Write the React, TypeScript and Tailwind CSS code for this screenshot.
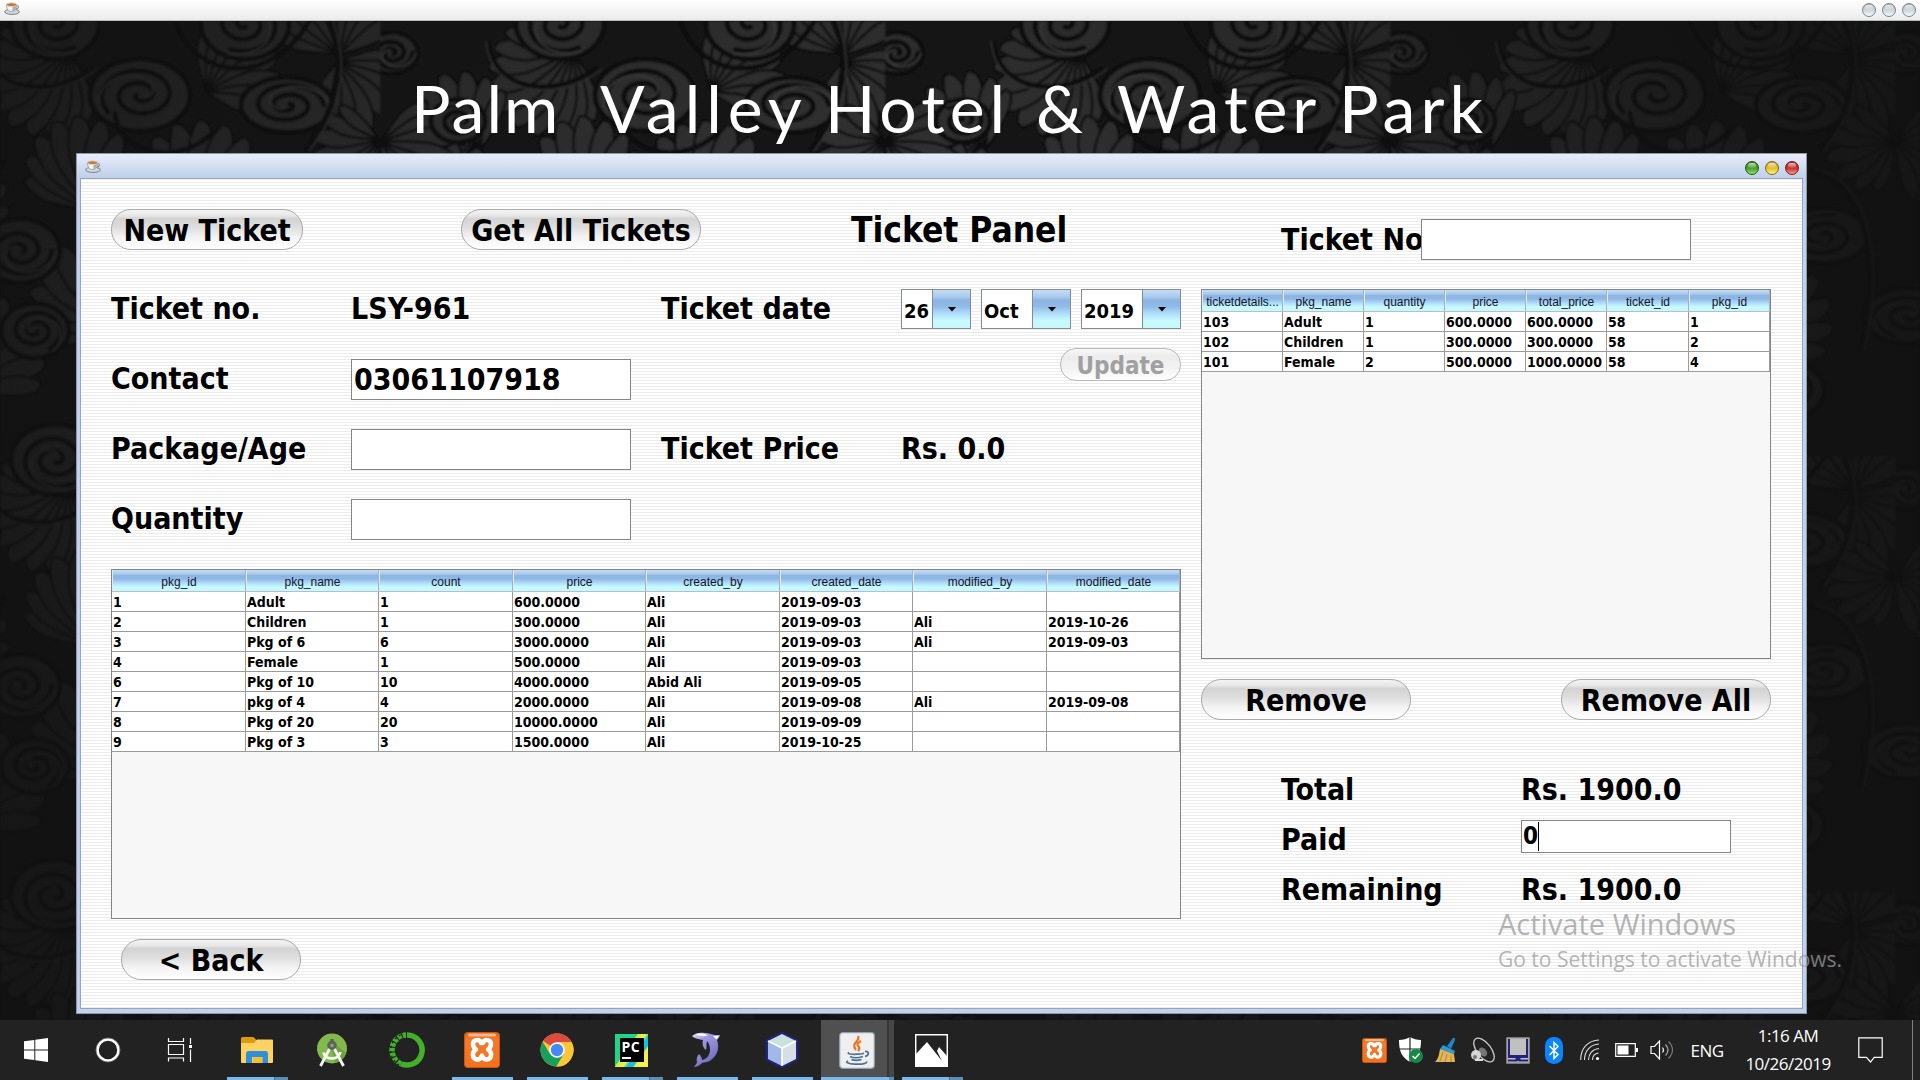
import React from "react";

const TAHOMA = "font-['DejaVu_Sans_Condensed','DejaVu_Sans',sans-serif] [font-stretch:condensed] font-bold";

/* ---------- wallpaper ---------- */

function spiral(cx: number, cy: number, r: number, turns: number, start: number, dir: number, sy = 1) {
  const n = Math.round(turns * 22);
  let d = "";
  for (let i = 0; i <= n; i++) {
    const t = i / n;
    const a = start + dir * t * turns * Math.PI * 2;
    const rr = r * (1 - t * 0.9);
    d += `${i ? "L" : "M"}${(cx + Math.cos(a) * rr).toFixed(1)} ${(cy + Math.sin(a) * rr * sy).toFixed(1)}`;
  }
  return d;
}

type CurlProps = { x: number; y: number; r: number; s?: number; dir?: number; sy?: number };
function Curl({ x, y, r, s = 0, dir = 1, sy = 0.8 }: CurlProps) {
  return (
    <g>
      <ellipse cx={x} cy={y} rx={r} ry={r * sy} fill="#363636" stroke="#0e0e0e" strokeWidth="5" />
      <path d={spiral(x, y, r * 0.8, 2.1, s, dir, sy)} fill="none" stroke="#101010" strokeWidth="5" strokeLinecap="round" />
      <path d={spiral(x, y, r * 0.93, 0.7, s, dir, sy)} fill="none" stroke="#484848" strokeWidth="1.5" />
    </g>
  );
}

type FanProps = { x: number; y: number; l: number; a: number; spread: number; n: number };
function Fan({ x, y, l, a, spread, n }: FanProps) {
  return (
    <g transform={`translate(${x} ${y})`}>
      {Array.from({ length: n }, (_, i) => {
        const k = l * (0.75 + 0.25 * Math.sin((i / (n - 1)) * Math.PI));
        return (
          <path
            key={i}
            transform={`rotate(${a + (i / (n - 1) - 0.5) * spread})`}
            d={`M0 0C${k * 0.3} ${-k * 0.06} ${k * 0.6} ${-k * 0.32} ${k} ${-k * 0.12}C${k * 1.08} ${k * 0.08} ${k * 0.6} ${k * 0.12} 0 0Z`}
            fill="#343434"
            stroke="#0e0e0e"
            strokeWidth="2.5"
          />
        );
      })}
    </g>
  );
}

function Motif() {
  return (
    <g>
      <Fan x={195} y={30} l={95} a={140} spread={120} n={10} />
      <Fan x={330} y={70} l={80} a={-30} spread={110} n={8} />
      <Fan x={463} y={34} l={95} a={-90} spread={130} n={9} />
      <Fan x={463} y={40} l={75} a={60} spread={120} n={8} />
      <Fan x={100} y={130} l={85} a={-120} spread={110} n={8} />
      <Fan x={215} y={190} l={95} a={-100} spread={100} n={8} />
      <Fan x={330} y={200} l={100} a={-95} spread={130} n={10} />
      <Fan x={60} y={210} l={90} a={-60} spread={130} n={9} />
      <Fan x={240} y={310} l={100} a={-120} spread={120} n={9} />
      <Fan x={360} y={330} l={100} a={-60} spread={130} n={9} />
      <Fan x={90} y={370} l={100} a={-70} spread={140} n={10} />
      <Fan x={300} y={430} l={90} a={-100} spread={130} n={9} />
      <Fan x={0} y={120} l={80} a={20} spread={110} n={7} />
      <Fan x={505} y={120} l={70} a={170} spread={110} n={7} />
      <Curl x={180} y={3} r={44} s={1} />
      <Curl x={370} y={3} r={44} s={2} dir={-1} />
      <Curl x={180} y={439} r={44} s={1} />
      <Curl x={370} y={439} r={44} s={2} dir={-1} />
      <Curl x={265} y={74} r={50} s={2.5} sy={0.72} />
      <Curl x={412} y={84} r={46} s={0} dir={-1} sy={0.6} />
      <Curl x={12} y={32} r={26} s={0} />
      <Curl x={78} y={100} r={27} s={4} />
      <Curl x={145} y={230} r={40} s={0} />
      <Curl x={433} y={215} r={46} s={5} dir={-1} sy={0.6} />
      <Curl x={14} y={295} r={46} s={2} sy={0.6} />
      <Curl x={519} y={295} r={46} s={2} sy={0.6} />
      <Curl x={160} y={310} r={34} s={1} dir={-1} />
      <Curl x={280} y={240} r={40} s={3} />
      <Curl x={400} y={370} r={34} s={3} />
      <path d="M108 20C112 70 175 80 218 46M300 0C320 60 400 70 440 -10M455 0C472 50 460 90 430 130M240 90C240 130 300 150 340 110M130 140C100 180 90 240 120 270M420 150C480 160 490 250 470 330M200 270C230 300 240 360 210 410" fill="none" stroke="#0d0d0d" strokeWidth="5" />
      <path d="M106 20C110 74 177 84 222 48M458 0C476 52 464 92 434 130M424 148C484 158 494 250 474 330" fill="none" stroke="#3a3a3a" strokeWidth="1.5" />
    </g>
  );
}

function Wallpaper() {
  return (
    <svg className="absolute inset-0 h-full w-full" viewBox="0 0 1920 1000" preserveAspectRatio="none" aria-hidden="true">
      <defs>
        <pattern id="damask" x="380" y="0" width="505" height="436" patternUnits="userSpaceOnUse">
          <rect width="505" height="436" fill="#131313" />
          <Motif />
        </pattern>
        <radialGradient id="vignette" gradientUnits="userSpaceOnUse" cx="860" cy="260" r="1020" gradientTransform="translate(860 260) scale(1 .75) translate(-860 -260)">
          <stop offset="0" stopColor="#111" stopOpacity="0.05" />
          <stop offset=".45" stopColor="#111" stopOpacity="0.3" />
          <stop offset=".85" stopColor="#111" stopOpacity="0.72" />
          <stop offset="1" stopColor="#111" stopOpacity="0.85" />
        </radialGradient>
        <filter id="soft"><feGaussianBlur stdDeviation=".9" /></filter>
      </defs>
      <rect width="1920" height="1000" fill="url(#damask)" filter="url(#soft)" />
      <rect width="1920" height="1000" fill="url(#vignette)" />
    </svg>
  );
}

/* ---------- small pieces ---------- */

function CupIcon() {
  return (
    <svg width="16" height="13" viewBox="0 0 16 13">
      <ellipse cx="8" cy="9.8" rx="7.4" ry="2.6" fill="#d4d8dc" stroke="#70767c" strokeWidth=".9" />
      <path d="M12 3.5c3.4-.6 3.4 3.800-1 3.600" fill="none" stroke="#8b9198" strokeWidth="1.100" />
      <path d="M2.500 2.500c.2 4.500 1.500 7 5 7s5-2.500 5.200-7z" fill="#f3f5f7" stroke="#8b9198" strokeWidth=".8" />
      <path d="M8 9c3 0 4-3 4.300-6L9 4z" fill="#a9afb6" />
      <ellipse cx="7.600" cy="2.700" rx="5" ry="1.900" fill="#c77a27" stroke="#d8dade" strokeWidth=".9" />
    </svg>
  );
}

function Orb({ className }: { className: string }) {
  return (
    <span className={`flex h-[14px] w-[14px] justify-center rounded-full border pt-px ${className}`}>
      <span className="h-[5px] w-[8px] rounded-full bg-gradient-to-b from-white/70 to-white/10" />
    </span>
  );
}

function PillButton({ className, children, disabled = false }: { className: string; children: React.ReactNode; disabled?: boolean }) {
  const tone = disabled
    ? "border-[#b9b9b9] text-[#a0a0a0] bg-[linear-gradient(#f8f8f8_0%,#ececec_25%,#f2f2f2_60%,#fefefe_100%)]"
    : "border-[#a9a9a9] text-black bg-[linear-gradient(#f4f4f4_0%,#e6e6e6_15%,#d3d3d3_22%,#dedede_45%,#f3f3f3_70%,#ffffff_100%)]";
  return (
    <button className={`flex shrink-0 items-center justify-center whitespace-nowrap border leading-none ${TAHOMA} ${tone} ${className}`}>
      {children}
    </button>
  );
}

function Label({ className = "", children }: { className?: string; children: React.ReactNode }) {
  return <div className={`shrink-0 whitespace-nowrap text-[30px] leading-none text-black ${TAHOMA} ${className}`}>{children}</div>;
}

function Field({ className = "", children }: { className?: string; children?: React.ReactNode }) {
  return <div className={`flex shrink-0 items-center border border-[#858585] bg-white leading-none text-black ${TAHOMA} ${className}`}>{children}</div>;
}

const GLOSS = "bg-[linear-gradient(#c4ddf4_0%,#a9cbed_18%,#8db4e2_27%,#8fb9e6_42%,#b0dbfa_62%,#c4fbff_80%,#cbf6ff_100%)]";

function Combo({ className, text, arrow }: { className: string; text: string; arrow: string }) {
  return (
    <div className={`flex h-[40px] shrink-0 border border-[#858b95] bg-white ${className}`}>
      <div className={`flex flex-1 items-center pl-[2px] pt-[3px] text-[20px] leading-none ${TAHOMA}`}>{text}</div>
      <div className={`flex items-center justify-center border-l border-[#858b95] ${GLOSS} ${arrow}`}>
        <svg width="8" height="5" viewBox="0 0 8 5"><path d="M0 0h8L4 4.500z" fill="#000" /></svg>
      </div>
    </div>
  );
}

type GridProps = { cols: string; head: string[]; rows: string[][]; className: string };
function DataTable({ cols, head, rows, className }: GridProps) {
  return (
    <div className={`border border-[#858585] bg-[#f7f7f7] ${className}`}>
      <div className={`grid h-[22px] border-b border-[#b5bfc9] ${cols}`}>
        {head.map((h) => (
          <div key={h} className={`flex items-center justify-center whitespace-nowrap border-l border-r border-l-[#dcebf8] border-r-[#a7b2bf] pt-[2px] font-['Liberation_Sans',Arial,sans-serif] text-[12px] leading-none text-[#15151f] ${GLOSS}`}>
            {h}
          </div>
        ))}
      </div>
      {rows.map((r, i) => (
        <div key={i} className={`grid h-[20px] bg-white ${cols}`}>
          {r.map((c, j) => (
            <div key={j} className={`flex items-center overflow-hidden whitespace-nowrap border-b border-r border-[#9b9b9b] pl-px pt-px text-[14px] leading-none text-black ${TAHOMA}`}>
              {c}
            </div>
          ))}
        </div>
      ))}
    </div>
  );
}

const PKG_HEAD = ["pkg_id", "pkg_name", "count", "price", "created_by", "created_date", "modified_by", "modified_date"];
const PKG_ROWS = [
  ["1", "Adult", "1", "600.0000", "Ali", "2019-09-03", "", ""],
  ["2", "Children", "1", "300.0000", "Ali", "2019-09-03", "Ali", "2019-10-26"],
  ["3", "Pkg of 6", "6", "3000.0000", "Ali", "2019-09-03", "Ali", "2019-09-03"],
  ["4", "Female", "1", "500.0000", "Ali", "2019-09-03", "", ""],
  ["6", "Pkg of 10", "10", "4000.0000", "Abid Ali", "2019-09-05", "", ""],
  ["7", "pkg of 4", "4", "2000.0000", "Ali", "2019-09-08", "Ali", "2019-09-08"],
  ["8", "Pkg of 20", "20", "10000.0000", "Ali", "2019-09-09", "", ""],
  ["9", "Pkg of 3", "3", "1500.0000", "Ali", "2019-10-25", "", ""],
];
const DET_HEAD = ["ticketdetails...", "pkg_name", "quantity", "price", "total_price", "ticket_id", "pkg_id"];
const DET_ROWS = [
  ["103", "Adult", "1", "600.0000", "600.0000", "58", "1"],
  ["102", "Children", "1", "300.0000", "300.0000", "58", "2"],
  ["101", "Female", "2", "500.0000", "1000.0000", "58", "4"],
];

/* ---------- application window ---------- */

function TicketWindow() {
  return (
    <div className="relative ml-[76px] flex h-[861px] w-[1731px] flex-col border border-[#8b98aa] bg-[#c2d2ec] px-[3px] pb-[4px]">
      <div className="-mx-[3px] flex h-[24px] shrink-0 items-center justify-between bg-gradient-to-b from-[#e9ecf9] to-[#bed0ea] pl-[8px] pr-[7px]">
        <CupIcon />
        <div className="flex gap-[6px] pt-[3px]">
          <Orb className="border-[#23570f] bg-[linear-gradient(#3b7a25,#4aa42a_55%,#93e06a)]" />
          <Orb className="border-[#806a14] bg-[linear-gradient(#bd9a26,#e2c22e_55%,#fff27a)]" />
          <Orb className="border-[#7a1b1b] bg-[linear-gradient(#9c2a2a,#cf3232_55%,#ff9c8e)]" />
        </div>
      </div>
      <div className="flex flex-1 gap-[20px] border border-[#98a5b6] bg-[repeating-linear-gradient(#ececec_0px,#ececec_1px,#ffffff_1px,#ffffff_3px)] pl-[30px] pt-[30px]">
        <div className="flex w-[1070px] flex-col">
          <div className="flex h-[41px] items-center">
            <PillButton className="h-[41px] w-[192px] rounded-[20px] pt-[2px] text-[30px]">New Ticket</PillButton>
            <PillButton className="ml-[158px] h-[41px] w-[240px] rounded-[20px] pt-[2px] text-[30px]">Get All Tickets</PillButton>
            <Label className="ml-[150px] pt-[2px] text-[35px]">Ticket Panel</Label>
          </div>
          <div className="mt-[24px] flex h-[70px] items-center">
            <Label className="w-[240px]">Ticket no.</Label>
            <Label className="w-[310px]">LSY-961</Label>
            <Label className="w-[240px]">Ticket date</Label>
            <div className="flex gap-[10px]">
              <Combo className="w-[70px]" text="26" arrow="w-[38px]" />
              <Combo className="w-[90px]" text="Oct" arrow="w-[38px]" />
              <Combo className="w-[100px]" text="2019" arrow="w-[38px]" />
            </div>
          </div>
          <div className="flex h-[70px] items-center">
            <Label className="w-[240px]">Contact</Label>
            <Field className="h-[41px] w-[280px] pl-[2px] pt-[2px] text-[30px]">03061107918</Field>
            <PillButton disabled className="-mt-[29px] ml-auto h-[33px] w-[121px] rounded-[16px] pt-[2px] text-[24px]">Update</PillButton>
          </div>
          <div className="flex h-[70px] items-center">
            <Label className="w-[240px]">Package/Age</Label>
            <Field className="h-[41px] w-[280px]" />
            <Label className="ml-[30px] w-[240px]">Ticket Price</Label>
            <Label>Rs. 0.0</Label>
          </div>
          <div className="flex h-[70px] items-center">
            <Label className="w-[240px]">Quantity</Label>
            <Field className="h-[41px] w-[280px]" />
          </div>
          <DataTable
            className="mt-[15px] h-[350px] w-[1070px]"
            cols="grid-cols-[134px_133px_134px_133px_134px_133px_134px_133px]"
            head={PKG_HEAD}
            rows={PKG_ROWS}
          />
          <PillButton className="ml-[10px] mt-[20px] h-[41px] w-[180px] rounded-[20px] pt-[2px] text-[30px]">&lt; Back</PillButton>
        </div>

        <div className="flex w-[570px] flex-col pt-[10px]">
          <div className="flex h-[41px] items-center pl-[80px]">
            <Label className="w-[140px] pt-[1px] text-[24px]">Ticket No.</Label>
            <Field className="h-[41px] w-[270px]" />
          </div>
          <DataTable
            className="mt-[29px] h-[370px] w-[570px]"
            cols="grid-cols-[81px_81px_81px_81px_81px_82px_81px]"
            head={DET_HEAD}
            rows={DET_ROWS}
          />
          <div className="mt-[20px] flex justify-between">
            <PillButton className="h-[41px] w-[210px] rounded-[20px] pt-[2px] text-[30px]">Remove</PillButton>
            <PillButton className="h-[41px] w-[210px] rounded-[20px] pt-[2px] text-[30px]">Remove All</PillButton>
          </div>
          <div className="mt-[45px] flex h-[50px] items-center pl-[80px]">
            <Label className="w-[240px] text-[24px]">Total</Label>
            <Label className="text-[24px]">Rs. 1900.0</Label>
          </div>
          <div className="flex h-[50px] items-center pl-[80px]">
            <Label className="w-[240px] text-[24px]">Paid</Label>
            <Field className="-mt-[8px] h-[33px] w-[210px] pl-[1px] text-[24px]">
              0<span className="h-[29px] w-px bg-black" />
            </Field>
          </div>
          <div className="flex h-[50px] items-center pl-[80px]">
            <Label className="w-[240px] text-[24px]">Remaining</Label>
            <Label className="text-[24px]">Rs. 1900.0</Label>
          </div>
        </div>
      </div>
    </div>
  );
}

/* ---------- taskbar icons ---------- */

function Xampp({ size }: { size: number }) {
  return (
    <svg width={size} height={size} viewBox="0 0 36 36">
      <defs><linearGradient id="xg" x2="0" y2="1"><stop stopColor="#e0611a" /><stop offset=".2" stopColor="#f47a2a" /><stop offset="1" stopColor="#f4701c" /></linearGradient></defs>
      <rect x=".5" y=".5" width="35" height="35" rx="3" fill="url(#xg)" stroke="#c9560f" />
      <rect x="4" y="1.500" width="28" height="3" rx="1.500" fill="#f9b68c" />
      <path d="M9 12c0-5 7-5 8-1 1 0 1 0 2 0 1-4 8-4 8 1 0 3-1 4-3 5.500 4 2 4.500 9-1 10-3 .5-4-2-5-4-1 2-2 4.500-5 4-5.500-1-5-8-1-10-2-1.500-3-2.500-3-5.500z" fill="none" stroke="#fff" strokeWidth="4.500" strokeLinejoin="round" />
    </svg>
  );
}

const WindowsLogo = () => (
  <svg width="24" height="24" viewBox="0 0 24 24" fill="#fff"><path d="M0 3.300 10.300 1.900v9.500H0zM11.300 1.700 24 0v11.400H11.300zM0 12.400h10.300v9.700L0 20.700zM11.300 12.400H24V24l-12.700-1.700z" /></svg>
);
const Cortana = () => (
  <svg width="26" height="26" viewBox="0 0 26 26"><circle cx="13" cy="13" r="10.500" fill="none" stroke="#fff" strokeWidth="2.600" /><circle cx="13" cy="13" r="12" fill="none" stroke="#888" strokeWidth=".7" /></svg>
);
const TaskView = () => (
  <svg width="26" height="24" viewBox="0 0 26 24" fill="none" stroke="#fff" strokeWidth="1.200"><path d="M1.500 0v3.500h15V0M1.500 23.500V20h15v3.500M1.500 6.500h15v10h-15zM23.500 0v6M23.500 11.500V24" /><path d="M22 7h3v3h-3z" fill="#fff" stroke="none" /></svg>
);
const Folder = () => (
  <svg width="32" height="27" viewBox="0 0 32 27">
    <path d="M0 1.500Q0 0 1.500 0h11l3 3H31q1 0 1 1v6H0z" fill="#dd9b0b" />
    <path d="M0 6h13l3-3.500h15q1 0 1 1V25q0 1-1 1H1q-1 0-1-1z" fill="#fdd263" />
    <path d="M12 18h9v8h-9z" fill="#f5c02f" />
    <path d="M5 17q0-3 3-3h16.500q2.500 0 2.500 3v9h-5.500v-6h-10.500v6H5z" fill="#2f8fdb" />
  </svg>
);
const AndroidStudio = () => (
  <svg width="32" height="34" viewBox="0 0 32 34">
    <circle cx="16" cy="15.500" r="15" fill="#83b84c" />
    <path d="M20 12 30 20a15 15 0 0 1-11 10l-3-14z" fill="#6fa23d" />
    <path d="M14.300 6h3.400v3h-3.400z" fill="#616161" /><circle cx="16" cy="12.500" r="3.300" fill="none" stroke="#616161" strokeWidth="3" />
    <path d="M13.500 16 4.500 33M18.500 16l9 17M7.500 19.500c1.500 8 15 8 17-.5" fill="none" stroke="#f4f4f4" strokeWidth="2.800" />
  </svg>
);
const Anaconda = () => (
  <svg width="36" height="36" viewBox="0 0 36 36" fill="none">
    <path d="M18 3a15 15 0 1 1-6 28.700" stroke="#43b02a" strokeWidth="5.500" />
    <path d="M12 31.700A15 15 0 0 1 17 3" stroke="#43b02a" strokeWidth="5.500" strokeDasharray="4 1.200" />
    <path d="M14 29A12.500 12.500 0 0 1 15 6M10 33A17 17 0 0 1 14 2" stroke="#222" strokeWidth="1.500" strokeDasharray="2 3" />
  </svg>
);
const Chrome = () => (
  <svg width="34" height="34" viewBox="0 0 34 34">
    <circle cx="17" cy="17" r="16.500" fill="#fcc737" />
    <path d="M17 17 3 8A16.500 16.500 0 0 1 31.500 9H17z" fill="#dc4b3e" />
    <path d="M2.700 8.800A16.500 16.500 0 0 0 16.500 33.500L24 21l-7-4-7 4z" fill="#15a05c" />
    <path d="M17 9h14.500A16.500 16.500 0 0 1 16.500 33.500L24 21z" fill="#fcc737" />
    <circle cx="17" cy="17" r="7.800" fill="#fff" /><circle cx="17" cy="17" r="6.200" fill="#4a88f1" />
  </svg>
);
const PyCharm = () => (
  <div className="flex h-[33px] w-[33px] items-center justify-center bg-[linear-gradient(125deg,#1fd789_0%,#21d28c_40%,#c9ec3f_41%,#f5f03f_55%,#14c5de_62%,#0fbfe0_72%,#f3f04a_76%)]">
    <div className="flex h-[24px] w-[24px] flex-col items-start bg-black pl-[2px] pt-[2px]">
      <span className="font-['Open_Sans',sans-serif] text-[14px] font-bold leading-[14px] tracking-[0.5px] text-white">PC</span>
      <span className="mt-[3px] h-[2px] w-[9px] bg-white" />
    </div>
  </div>
);
const Dolphin = () => (
  <svg width="32" height="36" viewBox="0 0 32 36">
    <defs><linearGradient id="dg" x2=".6" y2="1"><stop stopColor="#e6e4fb" /><stop offset=".3" stopColor="#a29ce6" /><stop offset="1" stopColor="#6f6ab8" /></linearGradient></defs>
    <path d="M1 4C4 1 9 0 14 1c5 0 8 3 15 2-1 3-2 4-3 5 3 8 0 16-6 20-4 3-7 2-9 3-2 2-5 4-8 4 1-2 3-3 3-5-1-3 0-6 2-8 2 2 3 4 3 6 5-1 8-5 8-10 0-4-1-7-3-9-1 3 0 6-1 9-3-2-4-6-3-10C8 7 4 7 1 4z" fill="url(#dg)" />
    <path d="M5 2.500q6-2.500 12 1-6 2-12-1zM22 4l6.500-.5-3 4z" fill="#fff" />
  </svg>
);
const Cube = () => (
  <svg width="36" height="38" viewBox="0 0 36 38">
    <path d="M18 2 33 9.500v19L18 36 3 28.500v-19z" fill="#1a1f7a" stroke="#20257f" strokeWidth="2.500" strokeLinejoin="round" />
    <path d="M18 3 32 10l-14 7L4 10z" fill="#c9e3dc" /><path d="M4 10l14 7v18L4 28z" fill="#a3b8e8" /><path d="M32 10l-14 7v18l14-7z" fill="#d5dfe4" />
    <path d="M4 10l14 7 14-7M18 17v18" fill="none" stroke="#fff" strokeWidth="1.600" />
  </svg>
);
const Java = () => (
  <svg width="36" height="37" viewBox="0 0 36 37">
    <rect x=".7" y=".7" width="34.600" height="35.600" rx="3" fill="#efefef" stroke="#8ea3b3" strokeWidth="1.200" />
    <path d="M19 4c3 5-8 7-2 14M22 9c-5 3-4 4-2 6 1 2 0 3-1 4" fill="none" stroke="#ec7420" strokeWidth="2.200" />
    <path d="M10 20.500c-3 1.500 4 2 8 1.700 4-.2 7-1 7-1M11 24.500c3 1.400 9 1.300 13 0M12.500 27.500c3 1 7 1 10 0M9 29c-7 3 18 5 19 .5M26 19.500c5-.5 4 4 0 5" fill="none" stroke="#4c7390" strokeWidth="1.700" />
  </svg>
);
const Photos = () => (
  <svg width="33" height="33" viewBox="0 0 33 33"><path d="M.7.7h31.600v31.600H.7z" fill="#222" stroke="#fff" strokeWidth="1.500" /><path d="M1 20 12 8l15 19-5-10 2-4 8 9v11H1z" fill="#fff" /></svg>
);

type App = { icon: React.ReactNode; open?: boolean; many?: boolean; active?: boolean };
const APPS: App[] = [
  { icon: <Folder />, open: true, many: true },
  { icon: <AndroidStudio /> },
  { icon: <Anaconda /> },
  { icon: <Xampp size={36} />, open: true },
  { icon: <Chrome />, open: true },
  { icon: <PyCharm />, open: true, many: true },
  { icon: <Dolphin />, open: true },
  { icon: <Cube />, open: true },
  { icon: <Java />, open: true, many: true, active: true },
  { icon: <Photos />, open: true, many: true },
];

function TaskButton({ icon, open, many, active }: App) {
  return (
    <div className="relative flex h-[60px] w-[75px] shrink-0 items-center justify-center">
      {active && (
        <div className="absolute inset-y-0 left-[2px] flex gap-[2px] bg-[#363636]">
          <div className="w-[66px] bg-[#505050]" />
          <div className="w-[5px] bg-[#474747]" />
        </div>
      )}
      <div className="relative flex">{icon}</div>
      {open && (
        <div className={active ? "absolute bottom-0 left-[2px] flex h-[3px] w-[73px]" : "absolute bottom-0 left-[8px] flex h-[3px] w-[61px]"}>
          <div className="flex-1 bg-[#76b9ed]" />
          {many && <div className={active ? "w-[5px] bg-[#5a8fb8]" : "w-[14px] border-l border-[#456f90] bg-[#5a8fb8]"} />}
        </div>
      )}
    </div>
  );
}

/* ---------- tray icons ---------- */

const Shield = () => (
  <svg width="25" height="28" viewBox="0 0 25 28"><path d="M12 1c3 2 7 3 11 3 0 10-2 17-11 22C3 21 1 14 1 4c4 0 8-1 11-3z" fill="#fff" /><path d="M12 1v25M1 13h22" stroke="#222" strokeWidth="1.200" /><circle cx="18" cy="20" r="7" fill="#128a43" /><path d="m14.500 20 2.500 2.500 4.500-5" fill="none" stroke="#fff" strokeWidth="1.500" /></svg>
);
const Broom = () => (
  <svg width="22" height="26" viewBox="0 0 22 26"><path d="m12 9 6-8q3-1 2 2l-4 9z" fill="#1e86c7" /><path d="m8 8 12 6-1 3L5 12z" fill="#2b9adb" /><path d="m5 12 14 5 1 8H0c4-4 4-8 5-13z" fill="#e3b55a" /><path d="m8 15-3 9M12 17l-2 8M16 18v7" stroke="#b5842e" /></svg>
);
const Horn = () => (
  <svg width="25" height="27" viewBox="0 0 25 27"><ellipse cx="14" cy="13" rx="7" ry="14" transform="rotate(-38 14 13)" fill="#222" stroke="#c9c9c9" strokeWidth="1.300" /><ellipse cx="13" cy="15" rx="3.500" ry="5" transform="rotate(-38 13 15)" fill="#777" /><circle cx="6" cy="18" r="5" fill="#d5d5d5" /><circle cx="5" cy="20" r="2" fill="#777" /><path d="M5 23h8" stroke="#ddd" strokeWidth="2" /></svg>
);
const Touchpad = () => (
  <svg width="24" height="27" viewBox="0 0 24 27"><path d="M1 1h22v25H1z" fill="#c0c0c0" stroke="#9a9a9a" strokeWidth="1.500" /><path d="M3 2v17h18V2M2 23.500h8.500v-3.500H2M22 23.500h-8.500v-3.500H22M12 20v4" fill="none" stroke="#23237e" strokeWidth="2" /></svg>
);
const Bluetooth = () => (
  <svg width="18" height="27" viewBox="0 0 18 27"><rect width="18" height="27" rx="8.500" fill="#0a84ff" /><path d="m4.500 9 8.500 8.500L9 21.500v-16l4 4L4.500 18" fill="none" stroke="#fff" strokeWidth="1.500" /></svg>
);
const Wifi = () => (
  <svg width="20" height="22" viewBox="0 0 20 22" fill="none" stroke="#ddd" strokeWidth="1.100"><path d="M.7 21C.7 9 8 1.500 19 1M4.500 21C4.500 12 10 5.500 19 5M8.500 21c0-6 4-11 10.500-11.500M12.500 21c0-4 2.500-6.500 6-7" /><circle cx="17.500" cy="19.500" r="1.600" fill="#fff" stroke="none" /></svg>
);
const Battery = () => (
  <svg width="23" height="14" viewBox="0 0 23 14"><path d="M.7.7h19.600v12.600H.7z" fill="none" stroke="#fff" strokeWidth="1.200" /><path d="M2.500 2.500h11v9h-11zM21 5h2v4h-2z" fill="#fff" /></svg>
);
const Volume = () => (
  <svg width="24" height="20" viewBox="0 0 24 20" fill="none" strokeWidth="1.200"><path d="M1 6.500h3.500L9.500 1v18l-5-5.500H1z" stroke="#fff" /><path d="M12.500 7.500q2 2.500 0 5" stroke="#eee" /><path d="M15.500 4.500q5 5.500 0 11" stroke="#aaa" /><path d="M18.500 1.500q8 8.500 0 17" stroke="#777" /></svg>
);
const Action = () => (
  <svg width="25" height="27" viewBox="0 0 25 27" fill="none" stroke="#fff" strokeWidth="1.200"><path d="M.8.8h23.400v19.500h-8L12.500 25l-4-4.700H.8z" /></svg>
);

const TRAY = [<Xampp size={25} />, <Shield />, <Broom />, <Horn />, <Touchpad />, <Bluetooth />, <Wifi />, <Battery />, <Volume />];
const SEGOE = "font-['Open_Sans','Noto_Sans',sans-serif]";

function Taskbar() {
  return (
    <div className="relative flex h-[60px] items-center bg-[#222222]">
      {[<WindowsLogo />, <Cortana />, <TaskView />].map((i, k) => (
        <div key={k} className="flex w-[72px] shrink-0 justify-center">{i}</div>
      ))}
      <div className="ml-[3px] flex">
        {APPS.map((a, k) => <TaskButton key={k} {...a} />)}
      </div>
      <div className="ml-auto flex h-full items-center">
        {TRAY.map((t, k) => (
          <div key={k} className="flex w-[36px] shrink-0 justify-center">{t}</div>
        ))}
        <div className={`ml-[8px] flex w-[38px] justify-center whitespace-nowrap text-[17px] leading-none tracking-[-0.6px] text-white ${SEGOE}`}>ENG</div>
        <div className={`ml-[8px] flex w-[108px] flex-col items-center whitespace-nowrap text-[17px] leading-[28px] tracking-[-0.5px] text-white ${SEGOE}`}>
          <span>1:16 AM</span>
          <span>10/26/2019</span>
        </div>
        <div className="flex w-[56px] justify-center"><Action /></div>
        <div className="ml-[14px] mr-[7px] h-full w-px bg-[#808080]" />
      </div>
    </div>
  );
}

/* ---------- page ---------- */

const TITLE = "font-['Lato',sans-serif] text-[66px] leading-none text-white";

export default function App() {
  return (
    <div className="flex h-[1080px] w-[1920px] flex-col overflow-hidden bg-[#111]">
      <div className="flex h-[21px] shrink-0 items-center justify-between border-b border-[#b9bdb9] bg-gradient-to-b from-white to-[#ebebeb] pl-[4px] pr-[4px]">
        <div className="-mt-[3px]"><CupIcon /></div>
        <div className="flex gap-[6px]">
          <Orb className="border-[#7b858c] bg-[linear-gradient(#a9b2b8,#cfd8dd_55%,#f4fbff)]" />
          <Orb className="border-[#7b858c] bg-[linear-gradient(#a9b2b8,#cfd8dd_55%,#f4fbff)]" />
          <Orb className="border-[#7b858c] bg-[linear-gradient(#a9b2b8,#cfd8dd_55%,#f4fbff)]" />
        </div>
      </div>
      <div className="relative h-[999px] shrink-0">
        <Wallpaper />
        <div className="relative flex h-[132px] whitespace-nowrap pl-[411px] pt-[54px]">
          <div className={`w-[189px] shrink-0 tracking-[2px] ${TITLE}`}>Palm</div>
          <div className={`w-[225px] shrink-0 tracking-[6px] ${TITLE}`}>Valley</div>
          <div className={`w-[211px] shrink-0 tracking-[5px] ${TITLE}`}>Hotel</div>
          <div className={`w-[81px] shrink-0 ${TITLE}`}>&amp;</div>
          <div className={`w-[222px] shrink-0 tracking-[5px] ${TITLE}`}>Water</div>
          <div className={`shrink-0 tracking-[5px] ${TITLE}`}>Park</div>
        </div>
        <TicketWindow />
        <div className={`absolute left-[1498px] top-[883px] whitespace-nowrap text-[#9b9b9b]/75 ${SEGOE}`}>
          <div className="text-[29px] leading-[40px]">Activate Windows</div>
          <div className="text-[21px] leading-[30px]">Go to Settings to activate Windows.</div>
        </div>
      </div>
      <Taskbar />
    </div>
  );
}
